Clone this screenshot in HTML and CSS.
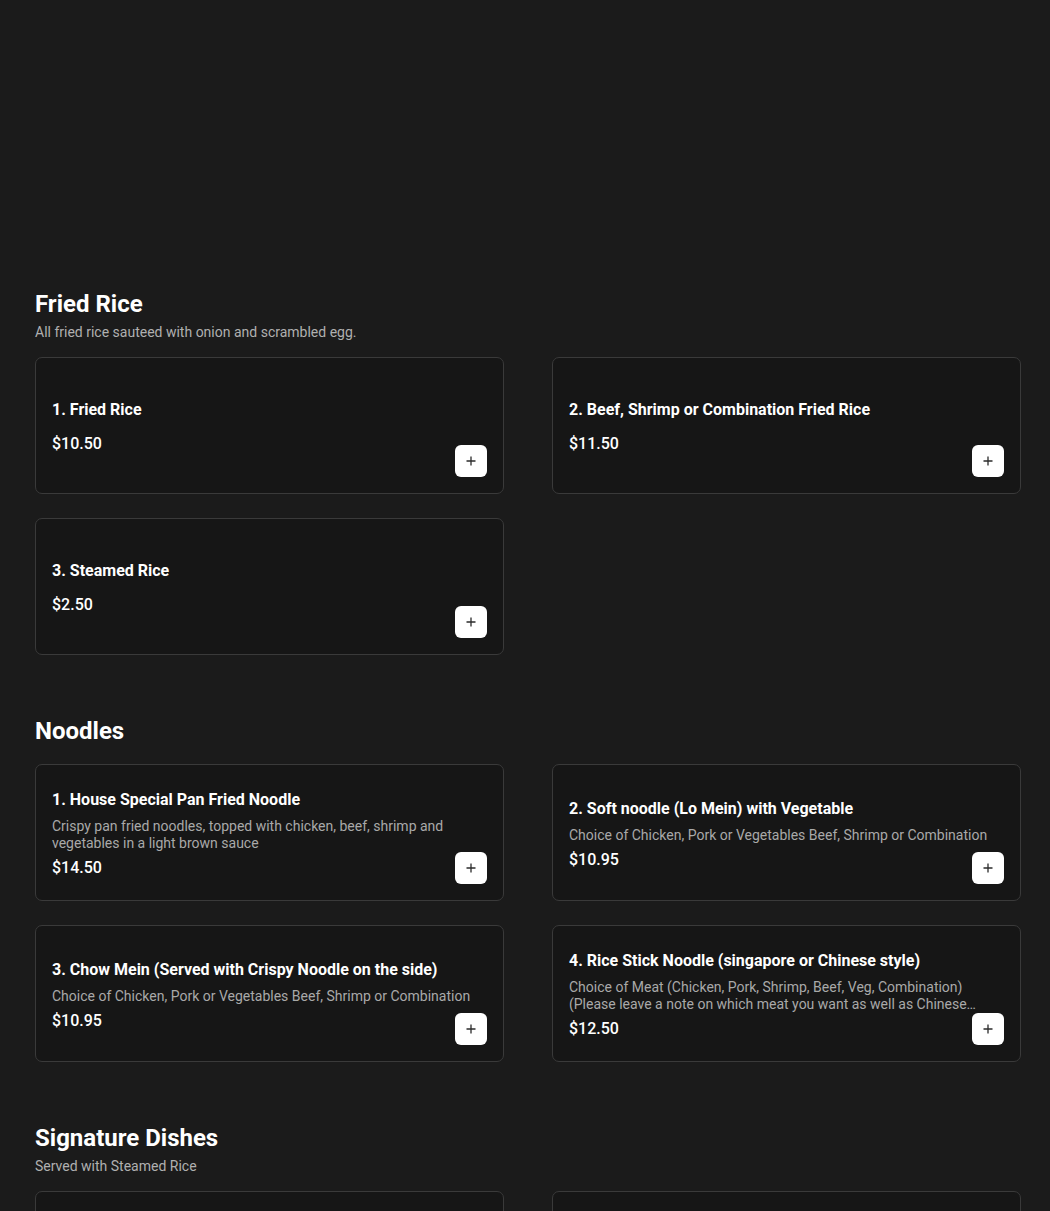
FILE: index.html
```html
<!DOCTYPE html>
<html lang="en">
<head>
<meta charset="utf-8">
<title>Menu</title>
<link rel="stylesheet" href="styles.css">
</head>
<body>
<main class="page">
  <div class="hero"></div>

  <section class="section">
    <header class="section-head">
      <h2 class="section-title">Fried Rice</h2>
      <p class="section-sub">All fried rice sauteed with onion and scrambled egg.</p>
    </header>
    <div class="grid">
      <div class="card">
        <div class="card-body">
          <h3 class="item-title">1. Fried Rice</h3>
          <div class="price">$10.50</div>
        </div>
        <button class="add" aria-label="Add"><svg viewBox="0 0 12 12" width="12" height="12"><path d="M6 1.5v9M1.5 6h9" stroke="#2b2b2b" stroke-width="1.3" fill="none"/></svg></button>
      </div>
      <div class="card">
        <div class="card-body">
          <h3 class="item-title">2. Beef, Shrimp or Combination Fried Rice</h3>
          <div class="price">$11.50</div>
        </div>
        <button class="add" aria-label="Add"><svg viewBox="0 0 12 12" width="12" height="12"><path d="M6 1.5v9M1.5 6h9" stroke="#2b2b2b" stroke-width="1.3" fill="none"/></svg></button>
      </div>
      <div class="card">
        <div class="card-body">
          <h3 class="item-title">3. Steamed Rice</h3>
          <div class="price">$2.50</div>
        </div>
        <button class="add" aria-label="Add"><svg viewBox="0 0 12 12" width="12" height="12"><path d="M6 1.5v9M1.5 6h9" stroke="#2b2b2b" stroke-width="1.3" fill="none"/></svg></button>
      </div>
    </div>
  </section>

  <section class="section">
    <header class="section-head">
      <h2 class="section-title">Noodles</h2>
    </header>
    <div class="grid">
      <div class="card">
        <div class="card-body">
          <h3 class="item-title">1. House Special Pan Fried Noodle</h3>
          <p class="desc">Crispy pan fried noodles, topped with chicken, beef, shrimp and vegetables in a light brown sauce</p>
          <div class="price">$14.50</div>
        </div>
        <button class="add" aria-label="Add"><svg viewBox="0 0 12 12" width="12" height="12"><path d="M6 1.5v9M1.5 6h9" stroke="#2b2b2b" stroke-width="1.3" fill="none"/></svg></button>
      </div>
      <div class="card">
        <div class="card-body">
          <h3 class="item-title">2. Soft noodle (Lo Mein) with Vegetable</h3>
          <p class="desc">Choice of Chicken, Pork or Vegetables Beef, Shrimp or Combination</p>
          <div class="price">$10.95</div>
        </div>
        <button class="add" aria-label="Add"><svg viewBox="0 0 12 12" width="12" height="12"><path d="M6 1.5v9M1.5 6h9" stroke="#2b2b2b" stroke-width="1.3" fill="none"/></svg></button>
      </div>
      <div class="card">
        <div class="card-body">
          <h3 class="item-title">3. Chow Mein (Served with Crispy Noodle on the side)</h3>
          <p class="desc">Choice of Chicken, Pork or Vegetables Beef, Shrimp or Combination</p>
          <div class="price">$10.95</div>
        </div>
        <button class="add" aria-label="Add"><svg viewBox="0 0 12 12" width="12" height="12"><path d="M6 1.5v9M1.5 6h9" stroke="#2b2b2b" stroke-width="1.3" fill="none"/></svg></button>
      </div>
      <div class="card">
        <div class="card-body">
          <h3 class="item-title">4. Rice Stick Noodle (singapore or Chinese style)</h3>
          <p class="desc">Choice of Meat (Chicken, Pork, Shrimp, Beef, Veg, Combination) (Please leave a note on which meat you want as well as Chinese style)</p>
          <div class="price">$12.50</div>
        </div>
        <button class="add" aria-label="Add"><svg viewBox="0 0 12 12" width="12" height="12"><path d="M6 1.5v9M1.5 6h9" stroke="#2b2b2b" stroke-width="1.3" fill="none"/></svg></button>
      </div>
    </div>
  </section>

  <section class="section">
    <header class="section-head">
      <h2 class="section-title">Signature Dishes</h2>
      <p class="section-sub">Served with Steamed Rice</p>
    </header>
    <div class="grid">
      <div class="card">
        <div class="card-body">
          <h3 class="item-title">1. General Tso's Chicken</h3>
          <div class="price">$14.95</div>
        </div>
        <button class="add" aria-label="Add"><svg viewBox="0 0 12 12" width="12" height="12"><path d="M6 1.5v9M1.5 6h9" stroke="#2b2b2b" stroke-width="1.3" fill="none"/></svg></button>
      </div>
      <div class="card">
        <div class="card-body">
          <h3 class="item-title">2. Sesame Chicken</h3>
          <div class="price">$14.95</div>
        </div>
        <button class="add" aria-label="Add"><svg viewBox="0 0 12 12" width="12" height="12"><path d="M6 1.5v9M1.5 6h9" stroke="#2b2b2b" stroke-width="1.3" fill="none"/></svg></button>
      </div>
    </div>
  </section>
</main>
</body>
</html>
```

FILE: styles.css
```css
* { box-sizing: border-box; }

html, body {
  margin: 0;
  padding: 0;
  background: #1b1b1b;
  color: #fff;
  font-family: Roboto, "Liberation Sans", Arial, sans-serif;
}

.page {
  padding: 0 29px 0 35px;
}

.hero {
  height: 288px;
}

.section {
  margin-bottom: 60px;
}

.section-head {
  margin-bottom: 17px;
}

.section-title {
  margin: 0;
  font-size: 24px;
  line-height: 32px;
  font-weight: 700;
  color: #fff;
}

.section-sub {
  margin: 4px 0 1px;
  font-size: 14px;
  line-height: 16px;
  color: #b0b0b0;
}

.grid {
  display: grid;
  grid-template-columns: 1fr 1fr;
  column-gap: 48px;
  row-gap: 24px;
}

.card {
  display: grid;
  grid-template-columns: 1fr;
  min-height: 137px;
  padding: 18px 16px 15px;
  border: 1px solid #3a3a3a;
  border-radius: 7px;
  background: #161616;
}

.card-body {
  grid-area: 1 / 1;
  align-self: center;
  min-width: 0;
}

.item-title {
  margin: 0;
  font-size: 16px;
  line-height: 24px;
  font-weight: 700;
  color: #fff;
}

.desc {
  margin: 6px 0 0;
  font-size: 14px;
  line-height: 17px;
  color: #a9a9a9;
  display: -webkit-box;
  -webkit-line-clamp: 2;
  -webkit-box-orient: vertical;
  overflow: hidden;
}

.price {
  margin-top: 10px;
  font-size: 16px;
  line-height: 24px;
  font-weight: 500;
  color: #fff;
}

.desc + .price {
  margin-top: 4px;
}

.add {
  grid-area: 1 / 1;
  justify-self: end;
  align-self: end;
  width: 32px;
  height: 32px;
  margin-bottom: 1px;
  padding: 0;
  border: none;
  border-radius: 6px;
  background: #fff;
  display: flex;
  align-items: center;
  justify-content: center;
  cursor: pointer;
}

.add svg { display: block; }
```
